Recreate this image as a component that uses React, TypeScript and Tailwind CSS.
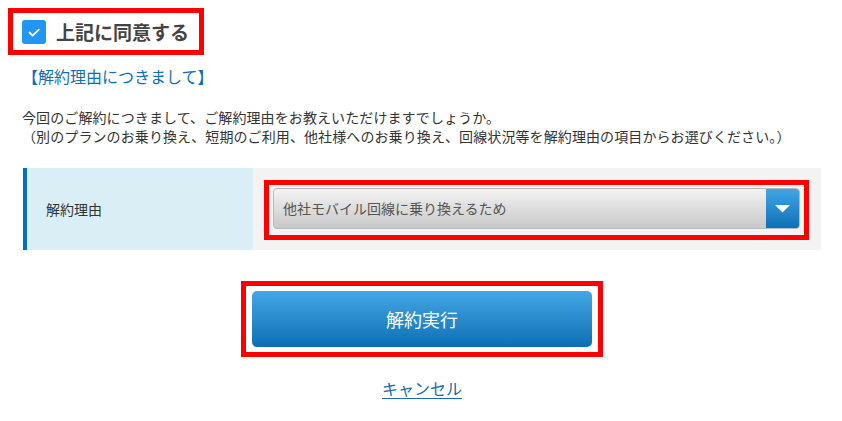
import React from "react";

export default function App() {
  return (
    <div
      className="w-[842px] h-[421px] bg-white overflow-hidden"
      style={{ fontFamily: '"Noto Sans CJK JP", "Noto Sans", sans-serif' }}
    >
      <div className="pt-[8px] pl-[8px]">
        <div className="flex items-center w-[196px] h-[47px] border-[5px] border-[#ff0000] pl-[9px]">
          <div className="w-[24px] h-[24px] rounded-[3px] bg-[#2196f3] flex items-center justify-center">
            <svg width="24" height="24" viewBox="0 0 24 24">
              <path d="M7.5 12.5 L10.6 15.6 L16.8 9.6" fill="none" stroke="#ffffff" strokeWidth="1.8" strokeLinecap="round" strokeLinejoin="round" />
            </svg>
          </div>
          <span className="ml-[10px] text-[19px] leading-[24px] font-bold text-[#444444]">上記に同意する</span>
        </div>
      </div>

      <div className="pl-[23px] pr-[21px]">
        <div className="mt-[9px] -ml-[1px] text-[16px] leading-[24px] text-[#0d6ebd]">【解約理由につきまして】</div>

        <p className="mt-[20px] -ml-[1px] text-[14px] leading-[19px] tracking-[0.1px] text-[#333333]">
          今回のご解約につきまして、ご解約理由をお教えいただけますでしょうか。
          <br />
          （別のプランのお乗り換え、短期のご利用、他社様へのお乗り換え、回線状況等を解約理由の項目からお選びください。）
        </p>

        <div className="mt-[22px] flex h-[82px]">
          <div className="w-[230px] border-l-4 border-[#0070c0] bg-[#d9eef5] flex items-center pl-[19px]">
            <span className="text-[14px] text-[#333333]">解約理由</span>
          </div>
          <div className="flex-1 bg-[#f3f3f3] pl-[11px] pr-[12px] pt-[12px] pb-[10px]">
            <div className="h-full border-[5px] border-[#ff0000] pt-[3px] pb-[6px] px-[4px]">
              <div className="h-[41px] flex rounded-[4px] border border-[#b9b9b9] bg-gradient-to-b from-[#f3f3f3] to-[#c8c8c8] overflow-hidden">
                <div className="flex-1 flex items-center pl-[9px] text-[14px] text-[#555555]">
                  他社モバイル回線に乗り換えるため
                </div>
                <div className="w-[33px] h-full bg-gradient-to-b from-[#40a6e3] to-[#0a70b7] flex items-center justify-center">
                  <svg width="15" height="8" viewBox="0 0 15 8">
                    <path d="M0 0 L15 0 L7.5 7.5 Z" fill="#ffffff" />
                  </svg>
                </div>
              </div>
            </div>
          </div>
        </div>

        <div className="mt-[31px] mx-auto w-[362px] h-[76px] border-[5px] border-[#ff0000] px-[6px] py-[5px]">
          <button className="w-full h-full rounded-[5px] bg-gradient-to-b from-[#43a7e4] to-[#0a6fb5] text-white text-[18px] flex items-center justify-center">
            解約実行
          </button>
        </div>

        <div className="mt-[19px] text-center text-[16px] leading-[24px]">
          <a href="#" className="text-[#1a6aad] underline underline-offset-[3px]">キャンセル</a>
        </div>
      </div>
    </div>
  );
}
